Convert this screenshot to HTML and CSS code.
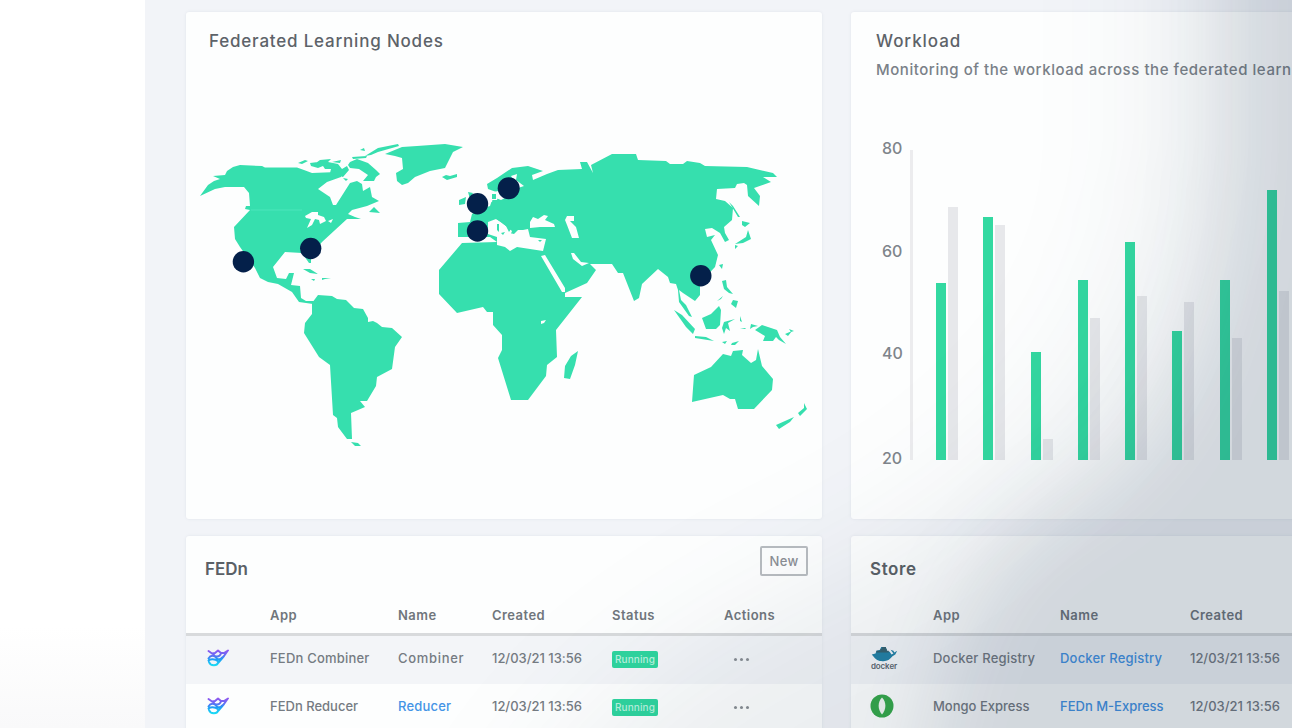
FILE: index.html
```html
<!DOCTYPE html>
<html lang="en">
<head>
<meta charset="utf-8">
<title>Dashboard</title>
<link rel="stylesheet" href="styles.css">
</head>
<body>
<div class="app">
  <aside class="sidebar"></aside>
  <main class="grid">
    <section class="card card-map">
      <h2 class="title">Federated Learning Nodes</h2>
      <svg class="map" viewBox="186 135 636 320" width="636" height="320">
        <g fill="#36dfae">
          <path d="M200 196L208 185L214 181L220 179L213 176L225 175L227 171L233 167L240 165L262 166L265 167.500L297 167.500L304 170L312 173L337 172L341 173L341 177L327 182L318 189L330 197L333 205H336L350 183L357 181L362 184L363 191L370 187L372 197L379 201L367 206L352 210L348 214L355 217L361 219L347 219L322 242L311 256V263H309L302 253L285 252L273 267L277 278L286 279L289 273L294 273L291 285L300 286L301 298L306 301L314 301L313 304L299 302L292 292L278 284L268 282L260 278L255 268L240 247L235 239L234 227L250 210L245 209L246 206H250L249 193L244 187H225L215 189Z"/>
          <path d="M312 303L318 295L332 296L337 299L346 300L354 308L363 309L368 318L368 322L373 321L377 323L382 327L392 328L402 337L395 347L392 369L377 377L376 386L367 401L360 401L365 407L351 413L352 439H347L338 427L337 418L333 415L330 365L319 357L304 333L305 323L312 314ZM351 442L358 443L361 446H355Z"/>
          <path d="M385 154L402 147L417 146L445 144L463 147L453 152L445 168L430 171L415 177L408 183L402 185L397 181L396 173L403 169L402 158L395 156ZM442 177L446 175L450 176L457 174L457 177L447 180Z"/>
          <path d="M365 156L378 148L398 144L399 146L378 152L371 155ZM360 150L364 148L365 151ZM352 157L367 156L366 158L353 159ZM350 162L357 159L368 163L376 170L380 174L376 177L374 181L363 181L368 175L359 169L350 168L348 165ZM332 162L341 160L340 163ZM342 169L347 166L349 170L343 177L330 173L331 169L325 169L323 166L318 168L311 166L310 163L318 162L313 165L320 160L331 159L328 162L338 164ZM298 163L305 160L308 161L302 164ZM343 178L348 179L346 181ZM369 212L374 207L380 213ZM303 269L310 269L318 274L310 273ZM311 279L315 279L314 281ZM322 278L331 278L325 279L322 280ZM335 279L338 280Z"/>
          <path d="M458 223L470 222L472 214L478 210L490 206L492 200L497 200L499 193L488 189L487 184L497 178L512 168L528 166L543 171L532 175L533 180L547 174L558 170L582 169L580 162H587L593 173L591 165L612 154H636L638 160L666 161L670 164H683L687 161L700 163L705 166L747 167L773 173L777 177L763 177L771 182L754 188L760 196L759 206L748 196L747 185L744 183L737 184L735 188L717 189L716 199L725 201L733 208L732 220L724 227L725 233L729 240L725 242L720 233L712 228L705 229L707 237L715 235L711 240L718 255L715 267L700 283V295L695 301L683 293L679 290L681 300L686 305L692 317L689 316L679 302L678 290L676 284L670 283L668 277L658 269L642 284L639 298L634 301L623 273H618L612 264H590L596 270L587 283L565 293L565 297L582 297L556 330L557 357L547 365L546 376L540 384L528 400H511L498 358L502 350V335L493 325V312H487L483 307L457 313L439 294V270L462 243L497 242L490 237H458Z"/>
          <path d="M578 351L575 365L570 379L564 378L565 366L571 356ZM459 200L466 197L465 204L459 205ZM468 192L473 193L470 199Z"/>
          <path d="M674 310L682 315L695 329L693 334L686 327ZM695 336L706 337L714 341L695 338ZM702 318L711 314L719 306L721 310L720 325L716 329H706ZM724 322L735 319L728 323L730 331L726 328L724 334L722 328ZM740 316L742 322L740 321ZM740 328H746L745 329ZM751 324L758 326L753 327L750 329ZM755 330L762 325L777 330L780 337L786 344L779 340L776 337L773 341L763 341L765 336L760 333ZM785 334L792 331L788 336ZM789 329L794 331L791 332ZM722 342L727 341L725 344ZM732 343L739 341L735 345L731 345ZM719 265L723 264L722 269ZM722 281L726 280L727 287L733 294L729 293L724 289ZM717 301L723 296L721 299ZM733 300L738 301L736 308L731 304ZM731 292L736 295ZM729 202L733 206L740 217L738 217ZM742 221L750 223L745 227L742 225ZM748 230L751 239L743 243L735 244L746 237ZM735 245L738 246L735 249Z"/>
          <path d="M694 375L711 367L723 354L731 356L733 351L743 350L742 355L751 363L756 360L758 349L762 366L773 379L772 390L754 409H738L735 399L730 399L723 395L692 402ZM776 425L794 417L790 422L779 429ZM798 413L804 408L804 403L807 409L800 416Z"/>
        </g>
        <g fill="#fdfefe">
          <path d="M488 222L496 219L501 222L512 231L510 236L506 232L514 234L518 230L523 230L528 229L530 237L546 239L543 251L517 247L510 251L505 247L497 245V237L488 234ZM530 222L533 217L538 219L544 215L548 216L545 220L554 224L555 227L540 227L530 228ZM567 216L574 216V221L570 221L576 227L579 238L572 238L567 225L565 220ZM541 256L545 255L565 288V292H562ZM571 253L574 253L581 262L589 263L582 266L573 259ZM541 321L546 320L544 323L541 324ZM490 193L498 191L501 196L507 197L501 200L493 197L492 202L488 201ZM511 176L517 174L516 180L524 186L518 188Z"/>
          <path d="M305 216L312 212L318 212V215L324 217L326 221L320 224L319 220L315 219L312 225L307 228L311 219L306 218ZM328 221L333 219L331 223Z"/>
        </g>
        <g fill="#36dfae"><path d="M495 218L500 218L511 229L509 232L506 226ZM501 233L505 232L503 235ZM497 224L499 224V232L497 230ZM492 194H496V199H492ZM538 240L542 240L540 242Z"/></g>
        <path d="M251 210H302" stroke="#4be6bb"/>
        <g fill="#04204a">
          <circle cx="477.500" cy="203.700" r="10.700"/><circle cx="508.700" cy="188.300" r="11"/><circle cx="477.500" cy="231" r="10.700"/>
          <circle cx="310.700" cy="248.500" r="10.700"/><circle cx="243.400" cy="261.800" r="10.700"/><circle cx="700.800" cy="275.700" r="10.700"/>
        </g>
      </svg>
    </section>

    <section class="card card-load">
      <h2 class="title t-work">Workload</h2>
      <p class="subtitle">Monitoring of the workload across the federated learn</p>
      <div class="chart">
        <div class="ticks"><span>80</span><span>60</span><span class="low">40</span><span>20</span></div>
        <div class="bars">
          <div class="pair"><i class="bar" style="height:177px"></i><i class="bar prev" style="height:253px"></i></div>
          <div class="pair"><i class="bar" style="height:243px"></i><i class="bar prev" style="height:235px"></i></div>
          <div class="pair"><i class="bar" style="height:108px"></i><i class="bar prev" style="height:21px"></i></div>
          <div class="pair"><i class="bar" style="height:180px"></i><i class="bar prev" style="height:142px"></i></div>
          <div class="pair"><i class="bar" style="height:218px"></i><i class="bar prev" style="height:164px"></i></div>
          <div class="pair"><i class="bar" style="height:129px"></i><i class="bar prev" style="height:158px"></i></div>
          <div class="pair"><i class="bar" style="height:180px"></i><i class="bar prev" style="height:122px"></i></div>
          <div class="pair"><i class="bar" style="height:270px"></i><i class="bar prev" style="height:169px"></i></div>
        </div>
      </div>
    </section>

    <section class="card fedn">
      <header class="card-head"><h2 class="heading">FEDn</h2><button class="new">New</button></header>
      <div class="row head"><span></span><span>App</span><span>Name</span><span>Created</span><span>Status</span><span>Actions</span></div>
      <div class="row odd">
        <span class="icon logo"><svg width="24" height="20" viewBox="0 0 24 20"><use href="#fedn"/></svg></span>
        <span>FEDn Combiner</span><span class="wide">Combiner</span><span class="date">12/03/21 13:56</span><span><b class="badge">Running</b></span><span class="dots"><i></i><i></i><i></i></span>
      </div>
      <div class="row">
        <span class="icon logo"><svg width="24" height="20" viewBox="0 0 24 20"><use href="#fedn"/></svg></span>
        <span class="tight">FEDn Reducer</span><a class="link">Reducer</a><span class="date">12/03/21 13:56</span><span><b class="badge">Running</b></span><span class="dots"><i></i><i></i><i></i></span>
      </div>
    </section>

    <section class="card store">
      <header class="card-head"><h2 class="heading spaced">Store</h2></header>
      <div class="row head"><span></span><span>App</span><span>Name</span><span>Created</span></div>
      <div class="row odd">
        <span class="icon docker">
          <svg width="28" height="17" viewBox="0 0 28 17"><path d="M1 9L5 8L6 5L10 4L11 1H16L17 5L20 6L22 9L24 8L21 4L24 5L25 7L28 5L26 9L23 11C20 15 16 17 11 16C7 16 4 13 1 9Z" fill="#2381a5"/><path d="M6 6H19M10 4H17M12 2H16" stroke="#35616f" stroke-width="2"/></svg>
          <em>docker</em>
        </span>
        <span>Docker Registry</span><a class="link">Docker Registry</a><span class="date">12/03/21 13:56</span>
      </div>
      <div class="row">
        <span class="icon"><svg width="24" height="24" viewBox="0 0 24 24"><circle cx="12" cy="12" r="11.500" fill="#36a84a"/><path d="M12 3.500C7.500 8 7.500 15 12 20.500C16.500 15 16.500 8 12 3.500Z" fill="#f2f7f3"/></svg></span>
        <span class="tight">Mongo Express</span><a class="link tight">FEDn M-Express</a><span class="date">12/03/21 13:56</span>
      </div>
    </section>
  </main>
  <svg class="shade" viewBox="0 0 1292 728" width="1292" height="728">
    <defs>
      <filter id="soft" filterUnits="userSpaceOnUse" x="-200" y="-500" width="2300" height="1900" color-interpolation-filters="sRGB"><feGaussianBlur stdDeviation="40"/></filter>
      <filter id="wide" filterUnits="userSpaceOnUse" x="-300" y="-500" width="2400" height="1900" color-interpolation-filters="sRGB"><feGaussianBlur stdDeviation="65"/></filter>
    </defs>
    <path d="M1160 -300V150C1150 330 1050 440 900 540C760 620 600 650 480 900H1700V-300Z" fill="#1c3350" fill-opacity=".075" filter="url(#wide)"/>
    <path d="M1225 -300V150C1220 330 1170 430 1090 490C990 545 935 590 900 900H1700V-300Z" fill="#1c3350" fill-opacity=".12" filter="url(#soft)"/>
  </svg>
</div>
<svg class="defs" width="0" height="0">
  <defs>
    <linearGradient id="fg" gradientUnits="userSpaceOnUse" x1="0" y1="1" x2="0" y2="18"><stop offset="0" stop-color="#9b55ee"/><stop offset=".35" stop-color="#6a68f3"/><stop offset=".6" stop-color="#1f9cf5"/><stop offset="1" stop-color="#1ae0f4"/></linearGradient>
    <g id="fedn" fill="none" stroke="url(#fg)" stroke-width="2" stroke-linecap="round" stroke-linejoin="round">
      <path d="M1.500 3L5 5.500L8 5L11 2.500L14 5L17 5L21 2.500M6.500 6C7.500 9.500 12.500 9.500 14 5.500M20.500 3L17 8L11.500 14.500M1.500 10.500C3.500 7 7.500 7 9.500 10C11 12 13.500 11.500 15 9.500M1.500 12.500C4 11 8 11 11.500 13.500C10.500 18.500 3.500 18.500 2 14"/>
    </g>
  </defs>
</svg>
</body>
</html>
```
FILE: styles.css
```css
* { box-sizing: border-box; margin: 0; padding: 0; }
body { width: 1292px; height: 728px; overflow: hidden; font-family: Inter, "Liberation Sans", sans-serif; color: #596069; }
.app { position: relative; display: flex; width: 1292px; height: 728px; overflow: hidden; background: #f2f4f8; }
.sidebar { flex: none; width: 145px; background: linear-gradient(#fff 86%, #f9f9fa); }
.grid { flex: none; display: grid; grid-template-columns: 636px 640px; grid-template-rows: 507px 240px; gap: 17px 29px; padding: 12px 0 0 41px; }
.card { background: #fdfefe; border-radius: 3px; box-shadow: 0 0 3px rgba(110, 120, 145, .13); overflow: hidden; }
.title { padding: 18px 0 0 23px; font-size: 17px; line-height: 22px; font-weight: 500; letter-spacing: .8px; white-space: nowrap; color: #5d6369; }
.map { display: block; margin-top: 83px; }
.t-work { padding-left: 25px; letter-spacing: .95px; }
.subtitle { padding: 8px 0 0 25px; font-size: 15px; line-height: 20px; font-weight: 500; letter-spacing: .55px; white-space: nowrap; color: #7a8188; }
.chart { display: flex; margin: 70px 0 0 31px; height: 310px; }
.ticks { display: flex; flex-direction: column; justify-content: space-between; width: 28px; height: 330px; margin-top: -12px; font-size: 16px; line-height: 20px; font-weight: 500; color: #7f858b; }
.low { transform: translateY(-2px); }
.bars { display: flex; gap: 25.300px; padding-left: 23px; border-left: 3px solid #ececee; }
.pair { display: flex; align-items: flex-end; gap: 2px; flex: none; width: 22px; }
.bar { flex: none; width: 10px; background: #33d9a1; }
.prev { background: #e7e8eb; }
.card-head { display: flex; justify-content: space-between; height: 63px; padding: 10px 14px 0 19px; }
.heading { padding-top: 12px; font-size: 17px; line-height: 22px; font-weight: 600; color: #5a6066; }
.spaced { letter-spacing: .6px; }
.new { width: 48px; height: 30px; border: 2px solid #b8bcc0; border-radius: 2px; background: transparent; font: 500 13px Inter, sans-serif; letter-spacing: .3px; color: #8b8f94; }
.row { display: grid; align-items: center; height: 48px; padding: 0 0 4px 19px; font-size: 13px; letter-spacing: .2px; white-space: nowrap; color: #757b82; font-weight: 500; }
.fedn .row { grid-template-columns: 65px 128px 94px 120px 112px 98px; }
.store .row { grid-template-columns: 63px 127px 130px 120px; }
.row.head { height: 37px; padding-bottom: 2px; border-bottom: 3px solid #d8dadc; font-weight: 600; letter-spacing: .45px; color: #70767c; }
.odd { background: #f3f5f8; }
.row .link { color: #4494e6; }
.row .wide { letter-spacing: .7px; }
.row .tight { letter-spacing: 0; }
.date { letter-spacing: -.02px; }
.icon { display: flex; align-items: center; height: 24px; }
.logo { padding-left: 2px; }
.docker { flex-direction: column; width: 28px; }
.docker em { font-size: 8px; line-height: 8px; font-style: normal; font-weight: 600; letter-spacing: -.1px; color: #5a666e; }
.badge { display: block; width: 46px; height: 17px; margin-top: 2px; border-radius: 2px; background: #2ed59e; color: #b9f3de; font-size: 10px; line-height: 17px; font-weight: 500; text-align: center; letter-spacing: .1px; }
.dots { display: flex; gap: 3px; padding: 3px 0 0 10px; }
.dots i { width: 3px; height: 3px; border-radius: 50%; background: #888d93; }
.shade { position: absolute; left: 0; top: 0; pointer-events: none; }
.defs { position: absolute; }
```
